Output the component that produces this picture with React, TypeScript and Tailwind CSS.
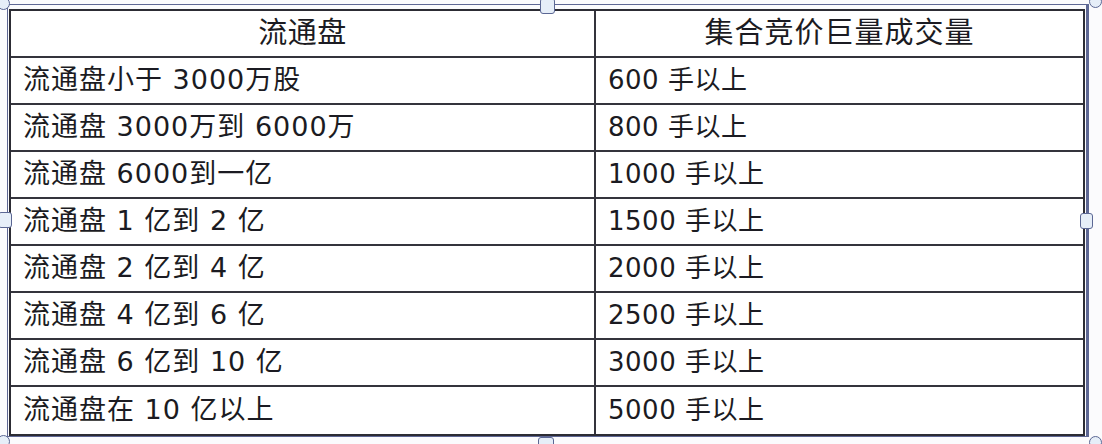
const rows: [string, string][] = [
  ["流通盘小于 3000万股", "600 手以上"],
  ["流通盘 3000万到 6000万", "800 手以上"],
  ["流通盘 6000到一亿", "1000 手以上"],
  ["流通盘 1 亿到 2 亿", "1500 手以上"],
  ["流通盘 2 亿到 4 亿", "2000 手以上"],
  ["流通盘 4 亿到 6 亿", "2500 手以上"],
  ["流通盘 6 亿到 10 亿", "3000 手以上"],
  ["流通盘在 10 亿以上", "5000 手以上"],
];

const Dot = ({ className }: { className: string }) => (
  <div className={"absolute w-[13px] h-[13px] rounded-full border border-[#5b6794] bg-[#e6eef8] " + className} />
);

const Square = ({ className }: { className: string }) => (
  <div className={"absolute rounded-[3px] border border-[#5b6794] bg-[#e6eef8] " + className} />
);

export default function App() {
  return (
    <div className="relative w-[1102px] h-[444px] overflow-hidden bg-[#fbfbfd] pt-[4px] pl-[7px] font-['DejaVu_Sans','Noto_Sans_CJK_SC',sans-serif] text-[#1b1b22]">
      <div className="w-[1082px] h-[433px] border-[1.5px] border-r-[3px] border-[#5e6794] pt-[4px] pl-[1px]">
        <div className="w-[1076px] border-2 border-[#2c2c34] bg-white grid grid-cols-[585px_1fr]">
          <div className="h-[47px] border-r-2 border-b-2 border-[#34343c] flex items-center justify-center text-[29px] tracking-[0.5px]">
            流通盘
          </div>
          <div className="h-[47px] border-b-2 border-[#34343c] flex items-center justify-center text-[29px] tracking-[1px]">
            集合竞价巨量成交量
          </div>
          {rows.map(([a, b], i) => (
            <div key={i} className="contents">
              <div
                className={
                  "h-[47px] border-r-2 border-[#34343c] flex items-center pl-[12px] text-[27px] tracking-[1px] " +
                  (i < rows.length - 1 ? "border-b-2" : "")
                }
              >
                {a}
              </div>
              <div
                className={
                  "h-[47px] border-[#34343c] flex items-center pl-[12px] text-[26px] tracking-[0.5px] " +
                  (i < rows.length - 1 ? "border-b-2" : "")
                }
              >
                {b}
              </div>
            </div>
          ))}
        </div>
      </div>

      <Dot className="-left-[3px] -top-[3px]" />
      <Dot className="left-[1089px] -top-[5px]" />
      <Dot className="-left-[3px] top-[435px]" />
      <Dot className="left-[1089px] top-[436px]" />
      <Square className="left-[540px] -top-[2px] w-[15px] h-[16px]" />
      <Square className="left-[538px] top-[437px] w-[16px] h-[14px]" />
      <Square className="-left-[2px] top-[212px] w-[14px] h-[16px]" />
      <Square className="left-[1080px] top-[213px] w-[13px] h-[16px]" />
    </div>
  );
}
